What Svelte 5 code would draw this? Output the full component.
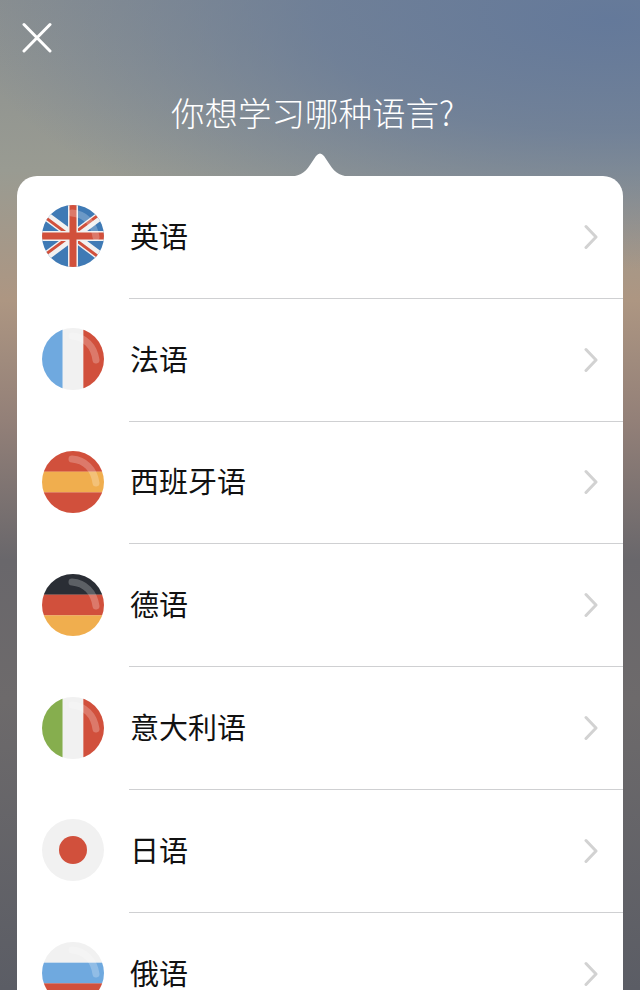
<script lang="ts">
    const languages = [
        { name: '英语', flag: 'uk' },
        { name: '法语', flag: 'fr' },
        { name: '西班牙语', flag: 'es' },
        { name: '德语', flag: 'de' },
        { name: '意大利语', flag: 'it' },
        { name: '日语', flag: 'jp' },
        { name: '俄语', flag: 'ru' },
    ]

    const stripes: Record<string, { dir: 'h' | 'v'; bands: string[] }> = {
        fr: { dir: 'v', bands: ['#6fa9df', '#f1f1f1', '#d1503c'] },
        it: { dir: 'v', bands: ['#86ae4e', '#f1f1f1', '#d1503c'] },
        es: { dir: 'h', bands: ['#d1503c', '#f0ae4e', '#d1503c'] },
        de: { dir: 'h', bands: ['#2a2e35', '#d1503c', '#f0ae4e'] },
        ru: { dir: 'h', bands: ['#f1f1f1', '#6fa9df', '#d1503c'] },
    }
</script>

<main class="screen">
    <button class="close" aria-label="关闭">
        <svg width="32" height="32" viewBox="0 0 32 32">
            <path d="M3 3.5 L29 30 M29 3.5 L3 30" fill="none" stroke="#fff" stroke-width="3" stroke-linecap="round" />
        </svg>
    </button>

    <h1 class="title">你想学习哪种语言?</h1>

    <section class="card">
        <svg class="notch" width="70" height="24" viewBox="0 0 70 24">
            <path d="M0 24 C14 24 20 20 25 12 L31 3 Q35 -2 39 3 L45 12 C50 20 56 24 70 24 Z" fill="#fff" />
        </svg>

        {#each languages as lang}
            <div class="row">
                <svg class="flag" width="62" height="62" viewBox="0 0 62 62">
                    <defs>
                        <clipPath id="clip-{lang.flag}"><circle cx="31" cy="31" r="31" /></clipPath>
                    </defs>
                    <g clip-path="url(#clip-{lang.flag})">
                        {#if lang.flag === 'uk'}
                            <rect width="62" height="62" fill="#3f7ab5" />
                            <path d="M0 8 L62 54 M0 54 L62 8" stroke="#f1f1f1" stroke-width="9" />
                            <path d="M0 10 L62 56 M0 52 L62 6" stroke="#d1503c" stroke-width="3" />
                            <path d="M31 0 V62 M0 31 H62" stroke="#f1f1f1" stroke-width="10" />
                            <path d="M31 0 V62 M0 31 H62" stroke="#d1503c" stroke-width="7" />
                        {:else if lang.flag === 'jp'}
                            <rect width="62" height="62" fill="#f1f1f1" />
                            <circle cx="31" cy="31" r="14" fill="#d1503c" />
                        {:else}
                            {@const s = stripes[lang.flag]}
                            {#each s.bands as band, i}
                                {#if s.dir === 'v'}
                                    <rect x={i * 20.67} y="0" width="20.8" height="62" fill={band} />
                                {:else}
                                    <rect x="0" y={i * 20.67} width="62" height="20.8" fill={band} />
                                {/if}
                            {/each}
                        {/if}
                        {#if lang.flag !== 'jp'}
                            <path d="M30 8 C43 9 52 18 54 32" fill="none" stroke="#fff" stroke-opacity="0.24" stroke-width="7" stroke-linecap="round" />
                        {/if}
                    </g>
                </svg>
                <div class="row-body">
                    <span class="name">{lang.name}</span>
                    <svg class="chevron" width="14" height="26" viewBox="0 0 14 26">
                        <path d="M2 2.5 L12 13 L2 23.5" fill="none" stroke="#d2d2d2" stroke-width="3" stroke-linecap="round" stroke-linejoin="round" />
                    </svg>
                </div>
            </div>
        {/each}
    </section>
</main>

<style>
    :global(body) {
        margin: 0;
    }

    .screen {
        height: 990px;
        overflow: hidden;
        box-sizing: border-box;
        padding: 21px 17px 0;
        font-family: "Noto Sans CJK SC", "Liberation Sans", sans-serif;
        background:
            radial-gradient(ellipse 640px 250px at 610px 20px, #64799a 0, rgba(100, 121, 154, 0.72) 45%, rgba(100, 121, 154, 0) 100%),
            linear-gradient(to bottom, #8a8f90 0, #999b92 170px, #ad9682 300px, #938078 420px, #69676b 560px, #6d6a6b 700px, #5b5d65 990px);
    }

    .close {
        display: block;
        width: 32px;
        height: 32px;
        padding: 0;
        margin: 0 0 0 4px;
        border: 0;
        background: none;
    }

    .title {
        margin: 37px 0 0;
        padding-right: 15px;
        font-size: 33.5px;
        font-weight: 300;
        line-height: 44px;
        color: #fff;
        text-align: center;
    }

    .card {
        position: relative;
        margin-top: 42px;
        background: #fff;
        border-radius: 20px 20px 0 0;
    }

    .notch {
        position: absolute;
        left: 268px;
        top: -23px;
    }

    .row {
        display: flex;
        align-items: center;
        height: 122.8px;
        padding-left: 25px;
    }

    .flag {
        flex: none;
        margin: 0 25px 2px 0;
    }

    .row-body {
        flex: 1;
        align-self: stretch;
        display: flex;
        align-items: center;
        justify-content: space-between;
        padding-right: 25px;
        border-bottom: 1px solid #cfd0d2;
    }

    .name {
        margin: 0 0 4px 1px;
        font-size: 29px;
        line-height: 30px;
        color: #111;
    }

    .chevron {
        flex: none;
    }
</style>
